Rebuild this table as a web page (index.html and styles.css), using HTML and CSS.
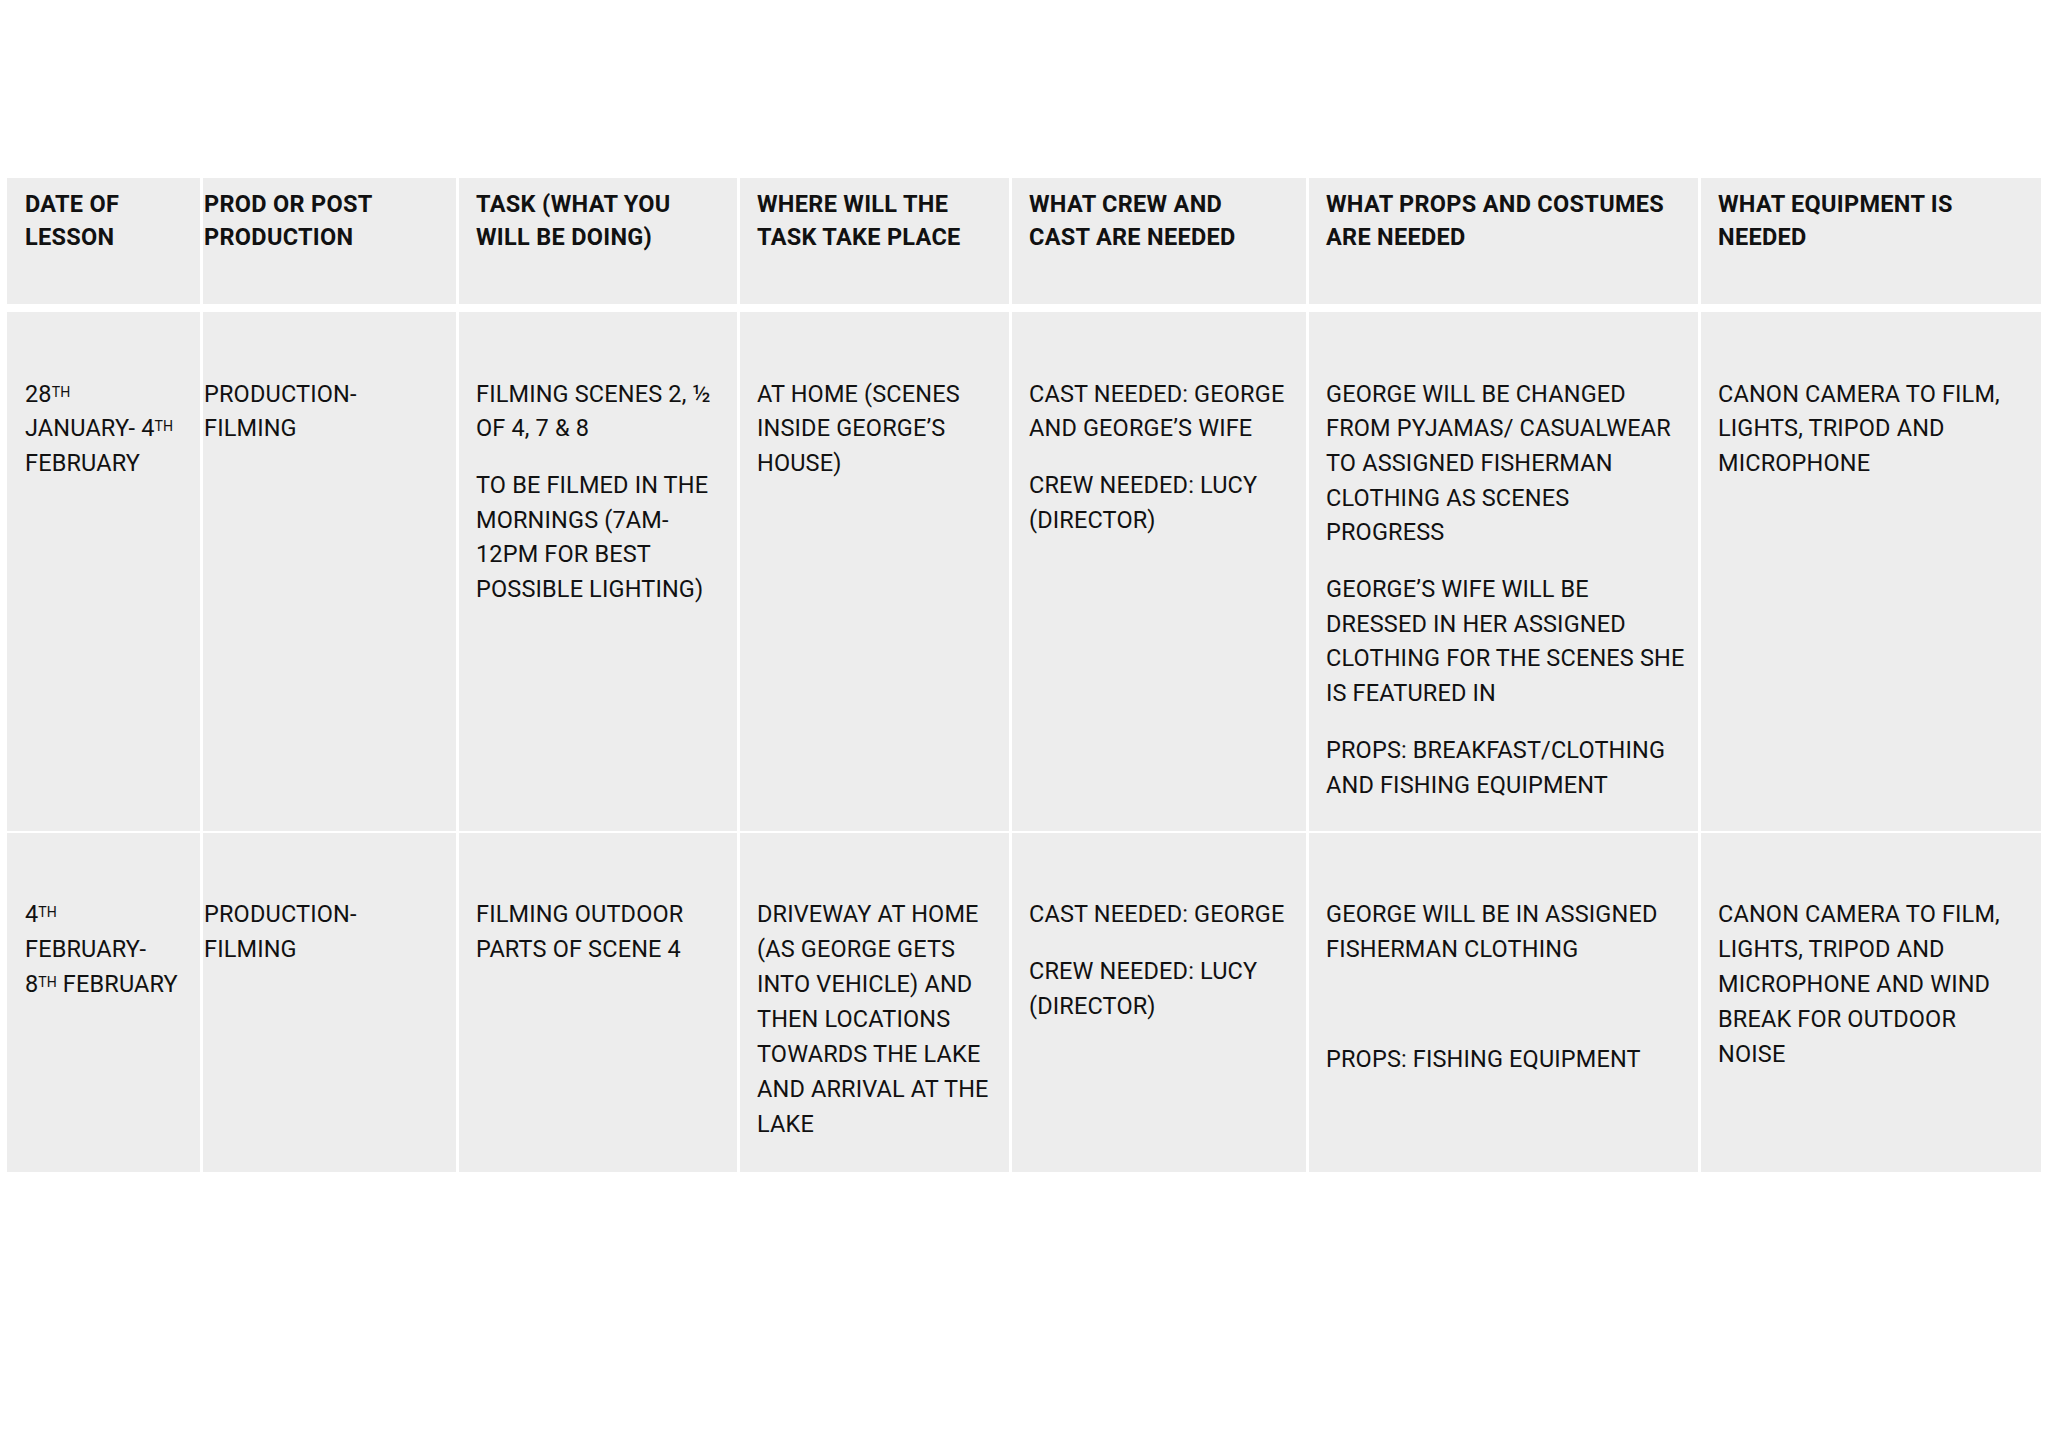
FILE: index.html
```html
<!DOCTYPE html>
<html lang="en">
<head>
<meta charset="utf-8">
<title>Production Schedule</title>
<link rel="stylesheet" href="styles.css">
</head>
<body>
<div class="sheet" role="table">
  <div class="cell head c1" role="columnheader"><p>DATE OF<br>LESSON</p></div>
  <div class="cell head c2" role="columnheader"><p>PROD OR POST<br>PRODUCTION</p></div>
  <div class="cell head c3" role="columnheader"><p>TASK (WHAT YOU<br>WILL BE DOING)</p></div>
  <div class="cell head c4" role="columnheader"><p>WHERE WILL THE<br>TASK TAKE PLACE</p></div>
  <div class="cell head c5" role="columnheader"><p>WHAT CREW AND<br>CAST ARE NEEDED</p></div>
  <div class="cell head c6" role="columnheader"><p>WHAT PROPS AND COSTUMES<br>ARE NEEDED</p></div>
  <div class="cell head c7" role="columnheader"><p>WHAT EQUIPMENT IS<br>NEEDED</p></div>

  <div class="cell r1 c1" role="cell"><p>28<sup>TH</sup><br>JANUARY- 4<sup>TH</sup><br>FEBRUARY</p></div>
  <div class="cell r1 c2" role="cell"><p>PRODUCTION-<br>FILMING</p></div>
  <div class="cell r1 c3" role="cell"><p>FILMING SCENES 2, ½<br>OF 4, 7 &amp; 8</p><p>TO BE FILMED IN THE<br>MORNINGS (7AM-<br>12PM FOR BEST<br>POSSIBLE LIGHTING)</p></div>
  <div class="cell r1 c4" role="cell"><p>AT HOME (SCENES<br>INSIDE GEORGE’S<br>HOUSE)</p></div>
  <div class="cell r1 c5" role="cell"><p>CAST NEEDED: GEORGE<br>AND GEORGE’S WIFE</p><p>CREW NEEDED: LUCY<br>(DIRECTOR)</p></div>
  <div class="cell r1 c6" role="cell"><p>GEORGE WILL BE CHANGED<br>FROM PYJAMAS/ CASUALWEAR<br>TO ASSIGNED FISHERMAN<br>CLOTHING AS SCENES<br>PROGRESS</p><p>GEORGE’S WIFE WILL BE<br>DRESSED IN HER ASSIGNED<br>CLOTHING FOR THE SCENES SHE<br>IS FEATURED IN</p><p>PROPS: BREAKFAST/CLOTHING<br>AND FISHING EQUIPMENT</p></div>
  <div class="cell r1 c7" role="cell"><p>CANON CAMERA TO FILM,<br>LIGHTS, TRIPOD AND<br>MICROPHONE</p></div>

  <div class="cell r2 c1" role="cell"><p>4<sup>TH</sup><br>FEBRUARY-<br>8<sup>TH</sup> FEBRUARY</p></div>
  <div class="cell r2 c2" role="cell"><p>PRODUCTION-<br>FILMING</p></div>
  <div class="cell r2 c3" role="cell"><p>FILMING OUTDOOR<br>PARTS OF SCENE 4</p></div>
  <div class="cell r2 c4" role="cell"><p>DRIVEWAY AT HOME<br>(AS GEORGE GETS<br>INTO VEHICLE) AND<br>THEN LOCATIONS<br>TOWARDS THE LAKE<br>AND ARRIVAL AT THE<br>LAKE</p></div>
  <div class="cell r2 c5" role="cell"><p>CAST NEEDED: GEORGE</p><p>CREW NEEDED: LUCY<br>(DIRECTOR)</p></div>
  <div class="cell r2 c6" role="cell"><p>GEORGE WILL BE IN ASSIGNED<br>FISHERMAN CLOTHING</p><p class="blank">&nbsp;</p><p>PROPS: FISHING EQUIPMENT</p></div>
  <div class="cell r2 c7" role="cell"><p>CANON CAMERA TO FILM,<br>LIGHTS, TRIPOD AND<br>MICROPHONE AND WIND<br>BREAK FOR OUTDOOR<br>NOISE</p></div>
</div>
</body>
</html>
```

FILE: styles.css
```css
html, body {
  margin: 0;
  padding: 0;
  background: #ffffff;
}

body {
  font-family: Roboto, "Liberation Sans", sans-serif;
  color: #111111;
  width: 2048px;
  height: 1448px;
  overflow: hidden;
}

.sheet {
  display: grid;
  grid-template-columns: 193px 256px 281px 272px 297px 392px 343px;
  grid-template-rows: 126px 527px 341px;
  width: 2034px;
  margin: 178px 0 0 7px;
}

.cell {
  box-sizing: border-box;
  background: #ededed;
  background-clip: padding-box;
  border-left: 3px solid #ffffff;
  padding-left: 17px;
  font-size: 23.5px;
  line-height: 34.7px;
  letter-spacing: 0.15px;
  white-space: nowrap;
}

.cell p {
  margin: 0 0 22px 0;
}

.cell p.blank {
  line-height: 31px;
}

.c1 {
  border-left: 0;
  padding-left: 18px;
}

.c2 {
  padding-left: 1px;
}

.head {
  font-weight: 700;
  padding-top: 9.5px;
  line-height: 33.5px;
  letter-spacing: 0.3px;
}

.r1 {
  border-top: 8px solid #ffffff;
  padding-top: 64.5px;
}

.r2 {
  border-top: 2px solid #ffffff;
  padding-top: 64px;
  line-height: 35px;
}

sup {
  font-size: 0.6em;
  line-height: 0;
  vertical-align: 0.37em;
  letter-spacing: 0;
}
```
